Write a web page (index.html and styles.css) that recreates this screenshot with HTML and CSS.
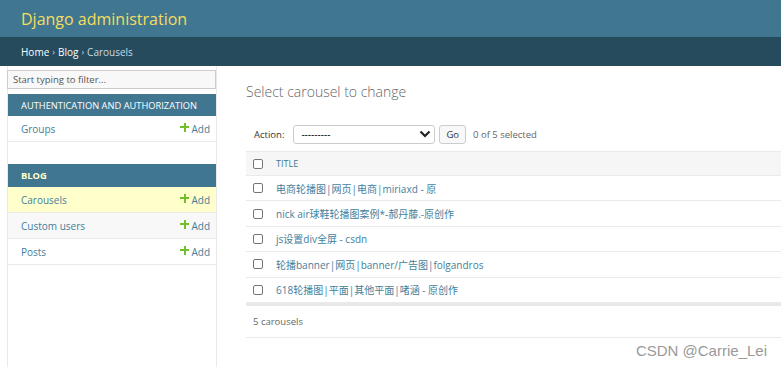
FILE: index.html
```html
<!DOCTYPE html>
<html lang="en">
<head>
    <meta charset="UTF-8">
    <title>Select carousel to change | Django site admin</title>
    <link rel="stylesheet" href="styles.css">
</head>
<body>
    <div id="header">
        <div class="branding">Django administration</div>
    </div>
    <div class="breadcrumbs">
        <a href="#">Home</a> <span class="sep">›</span> <a href="#">Blog</a> <span class="sep">›</span> Carousels
    </div>

    <div class="main">
        <div class="sidebar">
            <input type="text" class="nav-filter" placeholder="Start typing to filter...">

            <div class="module">
                <div class="caption">Authentication and Authorization</div>
                <div class="model-row">
                    <a href="#">Groups</a>
                    <a href="#" class="addlink">Add</a>
                </div>
            </div>

            <div class="module current-app">
                <div class="caption">Blog</div>
                <div class="model-row current-model">
                    <a href="#">Carousels</a>
                    <a href="#" class="addlink">Add</a>
                </div>
                <div class="model-row alt">
                    <a href="#">Custom users</a>
                    <a href="#" class="addlink">Add</a>
                </div>
                <div class="model-row">
                    <a href="#">Posts</a>
                    <a href="#" class="addlink">Add</a>
                </div>
            </div>
        </div>

        <div class="content">
            <h1>Select carousel to change</h1>

            <div class="actions">
                <label>Action:</label>
                <div class="select">
                    <span>---------</span>
                    <svg width="12" height="8" viewBox="0 0 12 8"><path d="M1.5 1.5 L6 6 L10.5 1.5" fill="none" stroke="#222" stroke-width="2.2"/></svg>
                </div>
                <button class="go">Go</button>
                <span class="counter">0 of 5 selected</span>
            </div>

            <div class="result-list">
                <div class="row head">
                    <span class="check"></span>
                    <span class="title">Title</span>
                </div>
                <div id="rows"></div>
            </div>

            <p class="paginator">5 carousels</p>
        </div>
    </div>

    <div class="watermark">CSDN @Carrie_Lei</div>

    <script>
        const carousels = [
            '电商轮播图|网页|电商|miriaxd - 原',
            'nick air球鞋轮播图案例*-郝丹藤.-原创作',
            'js设置div全屏 - csdn',
            '轮播banner|网页|banner/广告图|folgandros',
            '618轮播图|平面|其他平面|啫涵 - 原创作'
        ];

        const rowsDiv = document.getElementById('rows');
        carousels.forEach((title) => {
            const row = document.createElement('div');
            row.className = 'row';
            row.innerHTML = `
                <span class="check"></span>
                <a href="#" class="title">${title}</a>
            `;
            rowsDiv.appendChild(row);
        });
    </script>
</body>
</html>
```

FILE: styles.css
```css
body {
    margin: 0;
    font-family: "Open Sans", "Noto Sans CJK SC", sans-serif;
    font-size: 10px;
    color: #333;
    background: #fff;
    height: 367px;
    overflow: hidden;
    position: relative;
}
a {
    color: #447e9b;
    text-decoration: none;
}
#header {
    background: #417690;
    height: 37px;
    display: flex;
    align-items: center;
    padding-left: 21px;
}
.branding {
    color: #f5dd5d;
    font-size: 16px;
    font-weight: 400;
}
.breadcrumbs {
    background: #264b5d;
    height: 29px;
    display: flex;
    align-items: center;
    gap: 3px;
    padding-left: 21px;
    color: #c4dce8;
    font-size: 10px;
}
.breadcrumbs a {
    color: #fff;
}
.breadcrumbs .sep {
    color: #c4dce8;
    font-size: 9px;
}
.main {
    display: flex;
    height: 301px;
}
.sidebar {
    margin-left: 7px;
    width: 208px;
    border-left: 1px solid #eaeaea;
    border-right: 1px solid #eaeaea;
    padding-top: 4px;
    flex-shrink: 0;
}
.nav-filter {
    display: block;
    box-sizing: border-box;
    width: 209px;
    height: 19px;
    margin: 0 0 5px -1px;
    padding: 0 5px;
    border: 1px solid #ccc;
    background: #f8f8f8;
    font-family: inherit;
    font-size: 9.5px;
}
.nav-filter::placeholder {
    color: #555;
}
.module {
    margin-bottom: 22px;
}
.caption {
    background: #417690;
    color: #fff;
    height: 22px;
    display: flex;
    align-items: center;
    padding-left: 13px;
    font-size: 9.3px;
    text-transform: uppercase;
}
.current-app .caption {
    color: #ffc;
    font-weight: bold;
    height: 23px;
}
.model-row {
    height: 25px;
    border-bottom: 1px solid #eaeaea;
    display: flex;
    align-items: center;
    justify-content: space-between;
    padding: 0 6px 0 13px;
    font-size: 10px;
}
.model-row.alt {
    background: #f8f8f8;
}
.model-row.current-model {
    background: #ffc;
}
.addlink {
    display: flex;
    align-items: center;
    gap: 2px;
}
.addlink::before {
    content: "";
    width: 9px;
    height: 9px;
    background:
        linear-gradient(#70bf2b, #70bf2b) center / 9px 2.4px no-repeat,
        linear-gradient(#70bf2b, #70bf2b) center / 2.4px 9px no-repeat;
    margin-top: -3px;
}
.content {
    flex: 1;
    padding-left: 29px;
}
h1 {
    margin: 16px 0 0;
    font-size: 14px;
    font-weight: 300;
    color: #666;
    height: 24px;
}
.actions {
    margin-top: 18px;
    height: 20px;
    display: flex;
    align-items: center;
    padding-left: 8px;
}
.actions label {
    color: #333;
    font-size: 9.5px;
    margin-right: 9px;
}
.select {
    box-sizing: border-box;
    width: 142px;
    height: 19px;
    border: 1px solid #ccc;
    border-radius: 3px;
    display: flex;
    align-items: center;
    justify-content: space-between;
    padding: 0 3px 0 7px;
    color: #000;
    font-size: 10px;
}
.go {
    margin-left: 4px;
    height: 19px;
    padding: 0 6px;
    border: 1px solid #ccc;
    border-radius: 3px;
    background: #f8f8f8;
    font-family: inherit;
    font-size: 9.5px;
    color: #333;
}
.counter {
    margin-left: 7px;
    color: #666;
    font-size: 9.5px;
}
.result-list {
    margin-top: 7px;
    border-bottom: 3px solid #e8e8e8;
}
.row {
    height: 24.4px;
    display: flex;
    align-items: center;
    border-bottom: 1px solid #eaeaea;
    padding-left: 7px;
    font-size: 10px;
}
.row.head {
    background: #f6f6f6;
    border-top: 1px solid #eaeaea;
    height: 23px;
}
.row.head .title {
    text-transform: uppercase;
    color: #417690;
    font-size: 9px;
}
.check {
    box-sizing: border-box;
    width: 10px;
    height: 10px;
    border: 1px solid #767676;
    border-radius: 2px;
    background: #fff;
    margin-right: 13px;
}
.paginator {
    margin: 0;
    height: 31px;
    display: flex;
    align-items: center;
    padding-left: 7px;
    border-bottom: 1px solid #eaeaea;
    color: #666;
    font-size: 9.5px;
}
.watermark {
    position: absolute;
    right: 14px;
    bottom: 8px;
    font-family: "Liberation Sans", Arial, sans-serif;
    font-size: 15px;
    color: #999;
}
```
